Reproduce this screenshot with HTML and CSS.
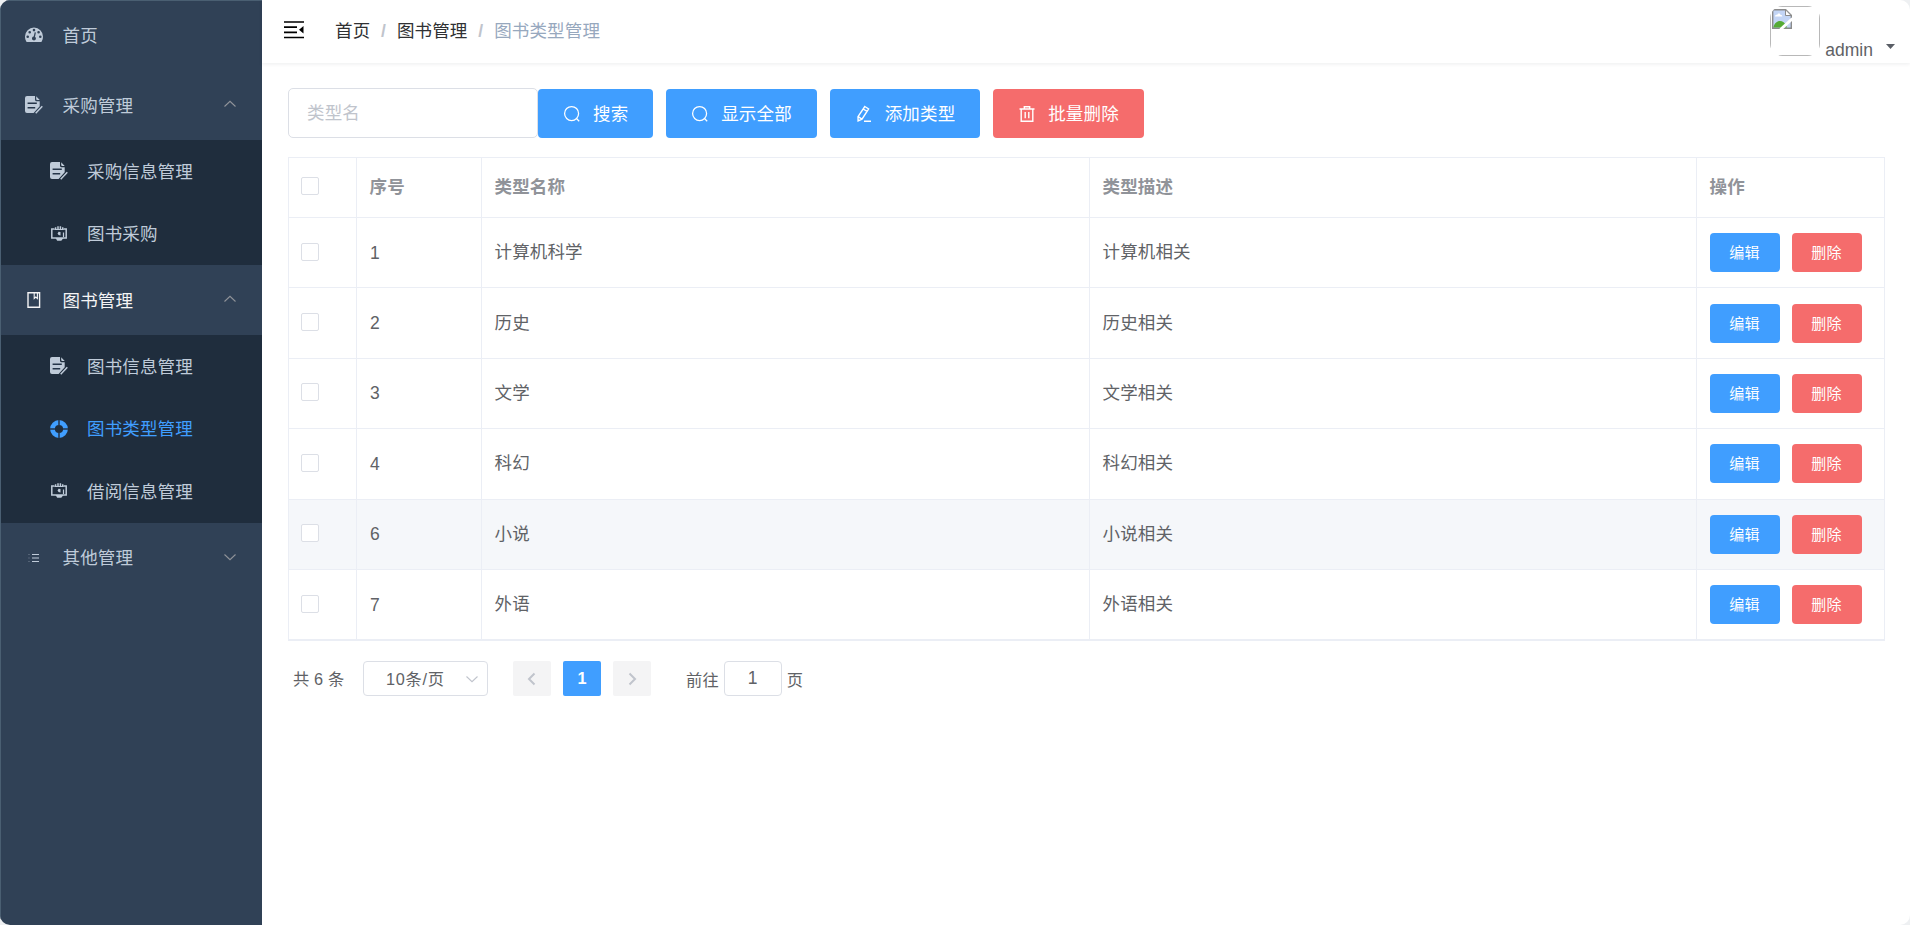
FILE: index.html
```html
<!DOCTYPE html>
<html lang="zh-CN">
<head>
  <meta charset="UTF-8">
  <title>图书类型管理</title>
  <link rel="stylesheet" href="styles.css">
</head>
<body>

<!-- icons -->
<svg class="sprite">
  <symbol id="i-dashboard" viewBox="0 0 18 18">
    <path fill="currentColor" fill-rule="evenodd" d="M9 1.500a9 9 0 0 0-9 9c0 1.900.5 3.500 1.300 4.900.2.400.5.600 1 .600h13.400c.500 0 .800-.200 1-.600.800-1.400 1.300-3 1.300-4.900a9 9 0 0 0-9-9zM2.700 12a1.300 1.300 0 1 1 0-2.600 1.300 1.300 0 0 1 0 2.600zM4.700 7.500a1.300 1.300 0 1 1 0-2.600 1.300 1.300 0 0 1 0 2.600zM9 5.400a1.300 1.300 0 1 1 0-2.600 1.300 1.300 0 0 1 0 2.600zM10.900 6.600l-.900 4.100a2 2 0 1 1-1.300-.300l1-4.100zM13.600 7.500a1.300 1.300 0 1 1 0-2.600 1.300 1.300 0 0 1 0 2.600zM15.300 12a1.300 1.300 0 1 1 0-2.600 1.300 1.300 0 0 1 0 2.600z"/>
  </symbol>
  <symbol id="i-form" viewBox="0 0 18 18">
    <path fill="currentColor" d="M2 0h8v3.500c0 1.200.6 1.800 1.800 1.800h2.900v5L8.600 17H2a2 2 0 0 1-2-2V2a2 2 0 0 1 2-2zM11.200.2l3.500 3.900h-2.500a1 1 0 0 1-1-1z"/>
    <path class="cut" d="M2.600 7.300h9.200M2.600 11.800h7.600"/>
    <path fill="none" stroke="currentColor" stroke-width="1.500" d="M17.300 10.300l-6.600 7"/>
  </symbol>
  <symbol id="i-money" viewBox="0 0 18 18">
    <path fill="none" stroke="currentColor" stroke-width="1.500" d="M4.500 4H1.800v9h14.400V4h-2.700"/>
    <path fill="none" stroke="currentColor" stroke-width="1.500" d="M5.600 5V2.300M8 5V1.200M10.400 5V1.200M12.700 5V2.300"/>
    <path fill="none" stroke="currentColor" stroke-width="1.200" d="M4.500 4.500h9M13.500 7.500V12"/>
    <path fill="currentColor" d="M5.500 13h8l-2.200 2.800H7.200z"/>
    <path fill="currentColor" d="M8.500 6.800l2 .2v3.400l-2-.4-.8-1.500z"/>
  </symbol>
  <symbol id="i-book" viewBox="0 0 18 18">
    <path fill="none" stroke="currentColor" stroke-width="1.400" d="M3 1.700h11.600v14.600H3z"/>
    <path fill="none" stroke="currentColor" stroke-width="1.100" d="M9.200 2v5.500l1.600-1.500 1.600 1.500V2"/>
  </symbol>
  <symbol id="i-help" viewBox="0 0 18 18">
    <circle cx="9" cy="9" r="6.500" fill="none" stroke="currentColor" stroke-width="4.800"/>
    <path class="cut" d="M9 0v5M9 13v5M0 9h5M13 9h5"/>
  </symbol>
  <symbol id="i-list" viewBox="0 0 18 18">
    <path fill="none" stroke="currentColor" stroke-width="1.200" d="M7 5.500h7M7 9h7M7 12.500h7"/>
    <path fill="none" stroke="currentColor" stroke-width="1" opacity=".5" d="M3.500 5.500h1M3.500 9h1M3.500 12.500h1"/>
  </symbol>
  <symbol id="i-arrow" viewBox="0 0 14 14">
    <path fill="none" stroke="currentColor" stroke-width="1.100" d="M1.500 9.500L7 4.300l5.500 5.200"/>
  </symbol>
  <symbol id="i-search" viewBox="0 0 18 18">
    <circle cx="8.600" cy="8.500" r="7" fill="none" stroke="currentColor" stroke-width="1.250"/>
    <path fill="none" stroke="currentColor" stroke-width="1.250" d="M13.500 13.500l2.700 2.700"/>
  </symbol>
  <symbol id="i-edit" viewBox="0 0 18 18">
    <path fill="none" stroke="currentColor" stroke-width="1.400" d="M9.800 1.500l3.800 2.400-6.600 10.200-3.900 1.800-.1-4.200zM8.200 4l3.800 2.400M3.200 11.700l3.700 2.400M9 16.300h7"/>
  </symbol>
  <symbol id="i-delete" viewBox="0 0 18 18">
    <path fill="none" stroke="currentColor" stroke-width="1.400" d="M1.500 4h15M3.200 4v12.200h11.600V4M6.300 3.700V1.800h5.400v2M7.200 7v6.200M10.800 7v6.200"/>
  </symbol>
</svg>

<div class="app">
  <div class="sidebar">
    <div class="menu-item"><svg class="icon"><use href="#i-dashboard"/></svg><span>首页</span></div>

    <div class="menu-item"><svg class="icon"><use href="#i-form"/></svg><span>采购管理</span><svg class="arrow"><use href="#i-arrow"/></svg></div>
    <div class="submenu">
      <div class="sub-item"><svg class="icon"><use href="#i-form"/></svg><span>采购信息管理</span></div>
      <div class="sub-item"><svg class="icon"><use href="#i-money"/></svg><span>图书采购</span></div>
    </div>

    <div class="menu-item opened"><svg class="icon"><use href="#i-book"/></svg><span>图书管理</span><svg class="arrow"><use href="#i-arrow"/></svg></div>
    <div class="submenu">
      <div class="sub-item"><svg class="icon"><use href="#i-form"/></svg><span>图书信息管理</span></div>
      <div class="sub-item active"><svg class="icon"><use href="#i-help"/></svg><span>图书类型管理</span></div>
      <div class="sub-item"><svg class="icon"><use href="#i-money"/></svg><span>借阅信息管理</span></div>
    </div>

    <div class="menu-item"><svg class="icon"><use href="#i-list"/></svg><span>其他管理</span><svg class="arrow down"><use href="#i-arrow"/></svg></div>
  </div>

  <div class="main">
    <div class="navbar">
      <svg class="hamburger" viewBox="0 0 20 18">
        <path fill="none" stroke="#000" stroke-width="1.700" d="M0 1h20M0 6.200h13M0 11.300h13M0 16.500h20"/>
        <path d="M19.500 5v7.500L15 8.700z"/>
      </svg>
      <div class="breadcrumb">
        <span>首页</span><i>/</i><span>图书管理</span><i>/</i><span class="last">图书类型管理</span>
      </div>
      <div class="user">
        <div class="avatar">
          <div class="avatar-box">
            <svg width="20" height="20" viewBox="0 0 20 20">
              <path fill="#c3d5f5" stroke="#8b8b8b" stroke-width="1.400" d="M.7.7h13l5.600 5.600v13H.7z"/>
              <path fill="#fff" d="M3 7.500c0-1.500 1.500-2 2.200-1.500.5-2 3-1.800 3.300 0 1.200-.2 1.800.5 1.800 1.500z"/>
              <path fill="#55ab35" d="M1.400 18.600c1.500-8 10-9 13-1.500l.6 1.500z"/>
              <path fill="#fff" stroke="#8b8b8b" d="M13.500.8v5.700h5.700z"/>
              <path stroke="#fff" stroke-width="3" d="M8.500 20.500L20.500 9.500"/>
            </svg>
          </div>
        </div>
        <span class="name">admin</span>
        <span class="caret"></span>
      </div>
    </div>

    <div class="content">
      <div class="toolbar">
        <input class="search" placeholder="类型名">
        <button class="btn"><svg class="icon"><use href="#i-search"/></svg><span>搜索</span></button>
        <button class="btn"><svg class="icon"><use href="#i-search"/></svg><span>显示全部</span></button>
        <button class="btn"><svg class="icon"><use href="#i-edit"/></svg><span>添加类型</span></button>
        <button class="btn danger"><svg class="icon"><use href="#i-delete"/></svg><span>批量删除</span></button>
      </div>

      <table class="table">
        <colgroup><col class="c1"><col class="c2"><col class="c3"><col class="c4"><col class="c5"></colgroup>
        <thead>
          <tr><th><span class="check"></span></th><th>序号</th><th>类型名称</th><th>类型描述</th><th>操作</th></tr>
        </thead>
        <tbody>
          <tr><td><span class="check"></span></td><td class="num">1</td><td>计算机科学</td><td>计算机相关</td><td class="last"><div class="ops"><button class="mini">编辑</button><button class="mini danger">删除</button></div></td></tr>
          <tr><td><span class="check"></span></td><td class="num">2</td><td>历史</td><td>历史相关</td><td class="last"><div class="ops"><button class="mini">编辑</button><button class="mini danger">删除</button></div></td></tr>
          <tr><td><span class="check"></span></td><td class="num">3</td><td>文学</td><td>文学相关</td><td class="last"><div class="ops"><button class="mini">编辑</button><button class="mini danger">删除</button></div></td></tr>
          <tr><td><span class="check"></span></td><td class="num">4</td><td>科幻</td><td>科幻相关</td><td class="last"><div class="ops"><button class="mini">编辑</button><button class="mini danger">删除</button></div></td></tr>
          <tr class="hover"><td><span class="check"></span></td><td class="num">6</td><td>小说</td><td>小说相关</td><td class="last"><div class="ops"><button class="mini">编辑</button><button class="mini danger">删除</button></div></td></tr>
          <tr><td><span class="check"></span></td><td class="num">7</td><td>外语</td><td>外语相关</td><td class="last"><div class="ops"><button class="mini">编辑</button><button class="mini danger">删除</button></div></td></tr>
        </tbody>
      </table>

      <div class="pagination">
        <span class="total">共 6 条</span>
        <div class="sizes"><span>10条/页</span><svg class="arrow down"><use href="#i-arrow"/></svg></div>
        <div class="page"><svg width="10" height="14" viewBox="0 0 10 14"><path d="M7.500 1.500L2 7l5.500 5.500"/></svg></div>
        <div class="page current">1</div>
        <div class="page"><svg width="10" height="14" viewBox="0 0 10 14"><path d="M2.500 1.500L8 7l-5.500 5.500"/></svg></div>
        <div class="jump"><span>前往</span><input value="1"><span>页</span></div>
      </div>
    </div>
  </div>
</div>

</body>
</html>
```
FILE: styles.css
```css
* {
  box-sizing: border-box;
}
body {
  margin: 0;
  background: #eef0f2;
  font-family: "Liberation Sans", "Noto Sans CJK SC", sans-serif;
  font-size: 17.5px;
  letter-spacing: .15px;
  color: #606266;
}
input, button {
  font-family: inherit;
  letter-spacing: inherit;
}
.sprite {
  display: block;
  width: 0;
  height: 0;
}
.app {
  display: flex;
  width: 1910px;
  height: 925px;
  border-radius: 10px;
  overflow: hidden;
  background: #fff;
}

/* sidebar */
.sidebar {
  width: 262px;
  flex: none;
  background: #304156;
  color: #bfcbd9;
  box-shadow: inset 1px 1px 0 #4a5f72;
}
.menu-item {
  height: 70px;
  padding: 0 25px;
  display: flex;
  align-items: center;
}
.menu-item.opened {
  color: #f4f4f5;
}
.icon {
  width: 18px;
  height: 18px;
  flex: none;
}
.sidebar .icon {
  margin-right: 19.5px;
}
.sidebar span {
  padding-bottom: 2px;
}
.arrow {
  width: 14px;
  height: 14px;
  margin-left: auto;
  color: #909399;
}
.menu-item .arrow {
  margin-bottom: 2px;
}
.down {
  transform: rotate(180deg);
}
.submenu {
  margin-left: 1px;
  background: #1f2d3d;
}
.sub-item {
  height: 62.5px;
  padding-left: 48.5px;
  display: flex;
  align-items: center;
}
.sub-item.active {
  color: #409eff;
}
.cut {
  fill: none;
  stroke: #253549;
  stroke-width: 1.5;
}

/* top bar */
.main {
  flex: 1;
}
.navbar {
  height: 63px;
  display: flex;
  box-shadow: 0 1px 4px rgba(0, 21, 41, .08);
}
.hamburger {
  width: 20px;
  height: 18px;
  margin: 20.5px 0 0 21.5px;
}
.breadcrumb {
  margin-left: 31.5px;
  line-height: 62px;
  color: #303133;
}
.breadcrumb i {
  margin: 0 10.8px;
  color: #c0c4cc;
  font-weight: bold;
  font-style: normal;
}
.breadcrumb .last {
  color: #97a8be;
}
.user {
  margin-left: auto;
  padding: 6px 15px 0 0;
  display: flex;
}
.avatar {
  width: 50px;
  height: 50px;
  border-radius: 12.5px;
  overflow: hidden;
}
.avatar-box {
  height: 50px;
  padding: 2px 1px;
  border: 1px solid #b8b8b8;
}
.name {
  margin: 34px 0 0 5px;
  line-height: 20px;
  letter-spacing: 0;
}
.caret {
  margin: 38px 0 0 13px;
  width: 9px;
  height: 5px;
  background: #5a5e66;
  clip-path: polygon(0 0, 100% 0, 50% 100%);
}

/* content */
.content {
  padding: 25px 25px 0 26px;
}
.toolbar {
  display: flex;
  align-items: flex-end;
  height: 50px;
}
.search {
  width: 250px;
  height: 50px;
  padding: 0 18px;
  border: 1px solid #dcdfe6;
  border-radius: 5px;
  font-size: 17.5px;
}
.search::placeholder {
  color: #c0c4cc;
}
.btn {
  height: 49px;
  padding: 0 25px;
  margin-right: 12.9px;
  display: flex;
  align-items: center;
  border: 0;
  border-radius: 4px;
  background: #409eff;
  color: #fff;
  font-size: 17.5px;
}
.btn .icon {
  margin-right: 12px;
}
.btn span {
  padding-bottom: 2px;
}
.danger {
  background: #f56c6c;
}

.table {
  margin-top: 19px;
  width: 1597px;
  table-layout: fixed;
  border-collapse: separate;
  border-spacing: 0;
  border: 1px solid #ebeef5;
  border-width: 1px 0 1px 1px;
}
.c1 { width: 68px; }
.c2 { width: 125px; }
.c3 { width: 608px; }
.c4 { width: 607px; }
.c5 { width: 188px; }
th, td {
  padding: 0 12.5px 4px;
  text-align: left;
  border-right: 1px solid #ebeef5;
  border-bottom: 1px solid #ebeef5;
}
th {
  height: 60px;
  color: #909399;
}
td {
  height: 70.4px;
}
th:first-child {
  padding-left: 12px;
}
td:first-child {
  padding: 0 12px 2px;
}
td.num {
  padding: 1px 13px 0;
}
td.last {
  padding: 0 12.5px;
}
.hover td {
  background: #f5f7fa;
}
.check {
  display: block;
  width: 18px;
  height: 18px;
  border: 1px solid #dcdfe6;
  border-radius: 2px;
  background: #fff;
}
.ops {
  display: flex;
  gap: 12px;
}
.mini {
  width: 70px;
  height: 39px;
  padding: 0 0 2px;
  border: 0;
  border-radius: 4px;
  background: #409eff;
  color: #fff;
  font-size: 15px;
}
.mini.danger {
  background: #f56c6c;
}

/* pagination */
.pagination {
  margin-top: 20px;
  padding-left: 5px;
  height: 35px;
  display: flex;
  align-items: center;
  font-size: 16.25px;
}
.total {
  width: 70px;
  padding-bottom: 2px;
}
.sizes {
  width: 125px;
  height: 35px;
  margin-right: 25px;
  padding: 0 8px 0 22px;
  display: flex;
  align-items: center;
  border: 1px solid #dcdfe6;
  border-radius: 4px;
}
.sizes span {
  padding-bottom: 1px;
  letter-spacing: .7px;
}
.sizes .arrow {
  color: #c0c4cc;
}
.page {
  width: 38px;
  height: 35px;
  margin-right: 12px;
  display: flex;
  align-items: center;
  justify-content: center;
  border-radius: 2px;
  background: #f4f4f5;
  font-weight: bold;
}
.page path {
  fill: none;
  stroke: #c0c4cc;
  stroke-width: 2;
}
.page.current {
  background: #409eff;
  color: #fff;
}
.jump {
  margin-left: 23px;
  display: flex;
  align-items: center;
}
.jump input {
  width: 58px;
  height: 35px;
  margin: 0 5px;
  padding: 0;
  border: 1px solid #dcdfe6;
  border-radius: 4px;
  text-align: center;
  font-size: 17.5px;
  color: #606266;
}
```
